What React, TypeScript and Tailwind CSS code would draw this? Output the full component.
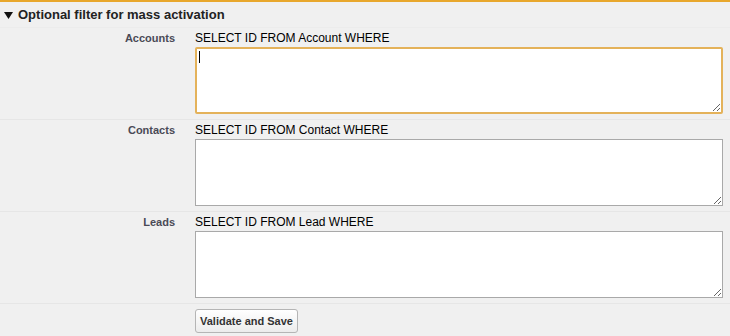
import React from 'react';

const rows = [
  { label: 'Accounts', query: 'SELECT ID FROM Account WHERE', focused: true },
  { label: 'Contacts', query: 'SELECT ID FROM Contact WHERE', focused: false },
  { label: 'Leads', query: 'SELECT ID FROM Lead WHERE', focused: false },
];

const FilterRow: React.FC<{ label: string; query: string; focused: boolean }> = ({ label, query, focused }) => {
  return (
    <div className="flex border-b border-[#e6e6e6] pt-[3px] pb-[5px]">
      <div className="w-[175px] shrink-0 text-right text-[11px] leading-[14px] font-bold text-[#4a4a56]">{label}</div>
      <div className="ml-[20px] flex flex-col">
        <div className="text-[12px] leading-[14px] text-black">{query}</div>
        <div className="relative mt-[2px]">
          <textarea
            className={
              focused
                ? 'block w-[528px] h-[67px] bg-white border-2 border-[#e4b25a] rounded-[2px] outline-none'
                : 'block w-[528px] h-[67px] bg-white border border-[#a9a9a9] outline-none'
            }
          />
          {focused && <span className="absolute left-[4px] top-[4px] w-px h-[12px] bg-black" />}
        </div>
      </div>
    </div>
  );
};

export default function App() {
  return (
    <div className="w-[730px] h-[336px] bg-[#f0f0f0] border-t-2 border-[#e8a72c] overflow-hidden" style={{ fontFamily: '"Liberation Sans", Arial, sans-serif' }}>
      <div className="h-[26px] flex items-center pl-[4px] border-b border-[#ececec]">
        <svg width="9" height="7" viewBox="0 0 9 7" className="mr-[5px] mt-[1px]">
          <polygon points="0,0 9,0 4.5,7" fill="#111" />
        </svg>
        <span className="text-[13px] font-bold text-[#222]">Optional filter for mass activation</span>
      </div>
      {rows.map(r => (
        <FilterRow key={r.label} {...r} />
      ))}
      <div className="pl-[195px] pt-[4px]">
        <button className="h-[24px] px-[4px] text-[11px] font-bold text-[#333] border border-[#b5b5b5] rounded-[3px] bg-gradient-to-b from-white to-[#ececec]">
          Validate and Save
        </button>
      </div>
    </div>
  );
}
